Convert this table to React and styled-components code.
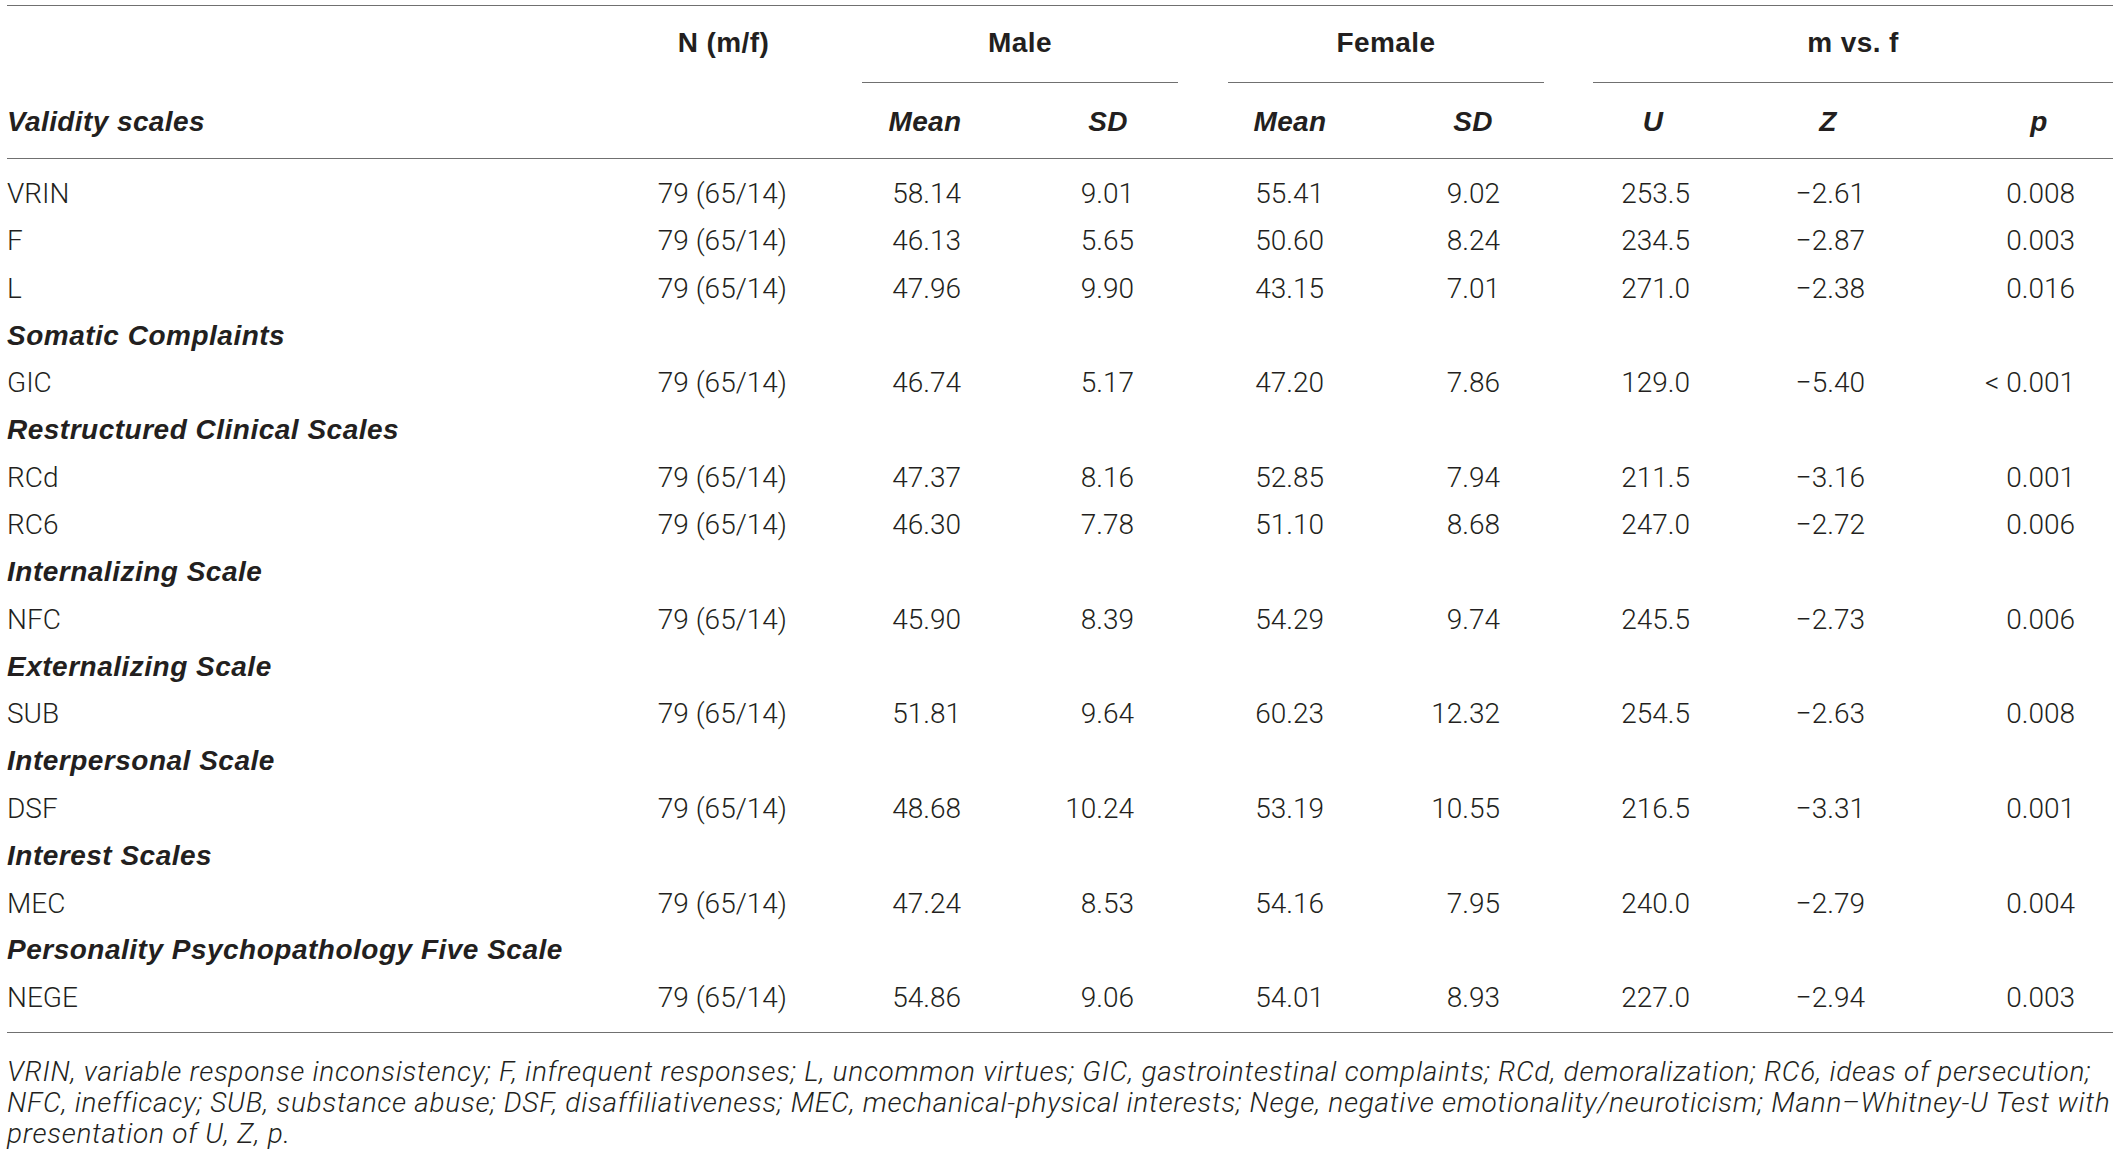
import React from 'react';
import styled, { createGlobalStyle } from 'styled-components';

const GRID = '621px 210px 182px 182px 182px 184px 182px 181px 182px';
const RULE = '#707070';
const INK = '#231f20';

const GlobalStyle = createGlobalStyle`
  html, body { margin: 0; padding: 0; background: #ffffff; overflow-x: hidden; }
  body { font-family: Roboto, 'Liberation Sans', Arial, sans-serif; color: ${INK}; }
`;

const Page = styled.div`
  width: 2106px;
  padding: 5px 6px 0 7px;
`;

const Table = styled.div`
  border-top: 1px solid ${RULE};
`;

const HeadRow = styled.div`
  display: grid;
  grid-template-columns: ${GRID};
  height: ${(p) => p.$h}px;
  border-bottom: ${(p) => (p.$rule ? `1px solid ${RULE}` : 'none')};
`;

const HeadCell = styled.div`
  display: flex;
  align-items: center;
  justify-content: ${(p) => (p.$left ? 'flex-start' : 'center')};
  padding: ${(p) => p.$pt || 0}px ${(p) => p.$pr || 0}px ${(p) => p.$pb || 0}px ${(p) => p.$pl || 0}px;
  font-family: 'Liberation Sans', Arial, sans-serif;
  font-weight: 700;
  font-size: 28px;
  letter-spacing: 0.4px;
  font-style: ${(p) => (p.$italic ? 'italic' : 'normal')};
  color: ${INK};
  white-space: nowrap;
`;

const GroupCell = styled.div`
  grid-column: span ${(p) => p.$span};
  display: flex;
  padding: 0 ${(p) => p.$ir}px 0 ${(p) => p.$il}px;
`;

const GroupLabel = styled.div`
  flex: 1;
  display: flex;
  align-items: center;
  justify-content: center;
  padding-bottom: 3px;
  border-bottom: 1px solid ${RULE};
  font-family: 'Liberation Sans', Arial, sans-serif;
  font-weight: 700;
  font-size: 28px;
  letter-spacing: 0.4px;
  color: ${INK};
  white-space: nowrap;
`;

const Body = styled.div`
  padding: 11px 0;
  border-bottom: 1px solid ${RULE};
`;

const Row = styled.div`
  display: grid;
  grid-template-columns: ${GRID};
  height: 47.3px;
  align-items: center;
  font-family: Roboto, 'Liberation Sans', Arial, sans-serif;
  font-weight: 300;
  font-size: 28px;
  color: ${INK};
`;

const Label = styled.div`
  white-space: nowrap;
`;

const Section = styled.div`
  grid-column: 1 / -1;
  font-family: 'Liberation Sans', Arial, sans-serif;
  font-weight: 700;
  font-style: italic;
  font-size: 28px;
  letter-spacing: 0.5px;
  white-space: nowrap;
`;

const Value = styled.div`
  text-align: right;
  padding-right: ${(p) => p.$pr}px;
  white-space: nowrap;
`;

const Footnote = styled.p`
  margin: 23px 0 0;
  font-family: Roboto, 'Liberation Sans', Arial, sans-serif;
  font-weight: 300;
  font-style: italic;
  font-size: 28px;
  line-height: 31px;
  letter-spacing: 0.72px;
  color: ${INK};
`;

const FootLine = styled.span`
  display: block;
  white-space: nowrap;
`;

const COLUMNS = [
  { key: 'n', head: null, pr: 51, hpl: 0, hpr: 19 },
  { key: 'mm', head: 'Mean', pr: 59, hpl: 0, hpr: 8 },
  { key: 'msd', head: 'SD', pr: 68, hpl: 0, hpr: 6 },
  { key: 'fm', head: 'Mean', pr: 60, hpl: 0, hpr: 6 },
  { key: 'fsd', head: 'SD', pr: 68, hpl: 0, hpr: 6 },
  { key: 'u', head: 'U', pr: 60, hpl: 0, hpr: 12 },
  { key: 'z', head: 'Z', pr: 66, hpl: 0, hpr: 25 },
  { key: 'p', head: 'p', pr: 38, hpl: 34, hpr: 0 },
];

const GROUPS = [
  { label: 'Male', span: 2, il: 24, ir: 24 },
  { label: 'Female', span: 2, il: 26, ir: 24 },
  { label: 'm vs. f', span: 3, il: 25, ir: 0 },
];

const N = '79 (65/14)';

const ROWS = [
  { name: 'VRIN', v: [N, '58.14', '9.01', '55.41', '9.02', '253.5', '\u22122.61', '0.008'] },
  { name: 'F', v: [N, '46.13', '5.65', '50.60', '8.24', '234.5', '\u22122.87', '0.003'] },
  { name: 'L', v: [N, '47.96', '9.90', '43.15', '7.01', '271.0', '\u22122.38', '0.016'] },
  { section: 'Somatic Complaints' },
  { name: 'GIC', v: [N, '46.74', '5.17', '47.20', '7.86', '129.0', '\u22125.40', '< 0.001'] },
  { section: 'Restructured Clinical Scales' },
  { name: 'RCd', v: [N, '47.37', '8.16', '52.85', '7.94', '211.5', '\u22123.16', '0.001'] },
  { name: 'RC6', v: [N, '46.30', '7.78', '51.10', '8.68', '247.0', '\u22122.72', '0.006'] },
  { section: 'Internalizing Scale' },
  { name: 'NFC', v: [N, '45.90', '8.39', '54.29', '9.74', '245.5', '\u22122.73', '0.006'] },
  { section: 'Externalizing Scale' },
  { name: 'SUB', v: [N, '51.81', '9.64', '60.23', '12.32', '254.5', '\u22122.63', '0.008'] },
  { section: 'Interpersonal Scale' },
  { name: 'DSF', v: [N, '48.68', '10.24', '53.19', '10.55', '216.5', '\u22123.31', '0.001'] },
  { section: 'Interest Scales' },
  { name: 'MEC', v: [N, '47.24', '8.53', '54.16', '7.95', '240.0', '\u22122.79', '0.004'] },
  { section: 'Personality Psychopathology Five Scale' },
  { name: 'NEGE', v: [N, '54.86', '9.06', '54.01', '8.93', '227.0', '\u22122.94', '0.003'] },
];

const FOOT = [
  'VRIN, variable response inconsistency; F, infrequent responses; L, uncommon virtues; GIC, gastrointestinal complaints; RCd, demoralization; RC6, ideas of persecution;',
  'NFC, inefficacy; SUB, substance abuse; DSF, disaffiliativeness; MEC, mechanical-physical interests; Nege, negative emotionality/neuroticism; Mann\u2013Whitney-U Test with',
  'presentation of U, Z, p.',
];

export default function App() {
  const nCol = COLUMNS[0];
  return (
    <Page>
      <GlobalStyle />
      <Table>
        <HeadRow $h={77}>
          <HeadCell />
          <HeadCell $pl={nCol.hpl} $pr={nCol.hpr} $pb={3}>N (m/f)</HeadCell>
          {GROUPS.map((g) => (
            <GroupCell key={g.label} $span={g.span} $il={g.il} $ir={g.ir}>
              <GroupLabel>{g.label}</GroupLabel>
            </GroupCell>
          ))}
        </HeadRow>
        <HeadRow $h={75} $rule>
          <HeadCell $left $italic $pt={2}>Validity scales</HeadCell>
          {COLUMNS.map((c) => (
            <HeadCell key={c.key} $italic $pt={2} $pl={c.hpl} $pr={c.hpr}>
              {c.head}
            </HeadCell>
          ))}
        </HeadRow>
        <Body>
          {ROWS.map((r, i) =>
            r.section ? (
              <Row key={i}>
                <Section>{r.section}</Section>
              </Row>
            ) : (
              <Row key={i}>
                <Label>{r.name}</Label>
                {r.v.map((val, j) => (
                  <Value key={j} $pr={COLUMNS[j].pr}>
                    {val}
                  </Value>
                ))}
              </Row>
            )
          )}
        </Body>
      </Table>
      <Footnote>
        {FOOT.map((line, i) => (
          <FootLine key={i}>{line}</FootLine>
        ))}
      </Footnote>
    </Page>
  );
}
